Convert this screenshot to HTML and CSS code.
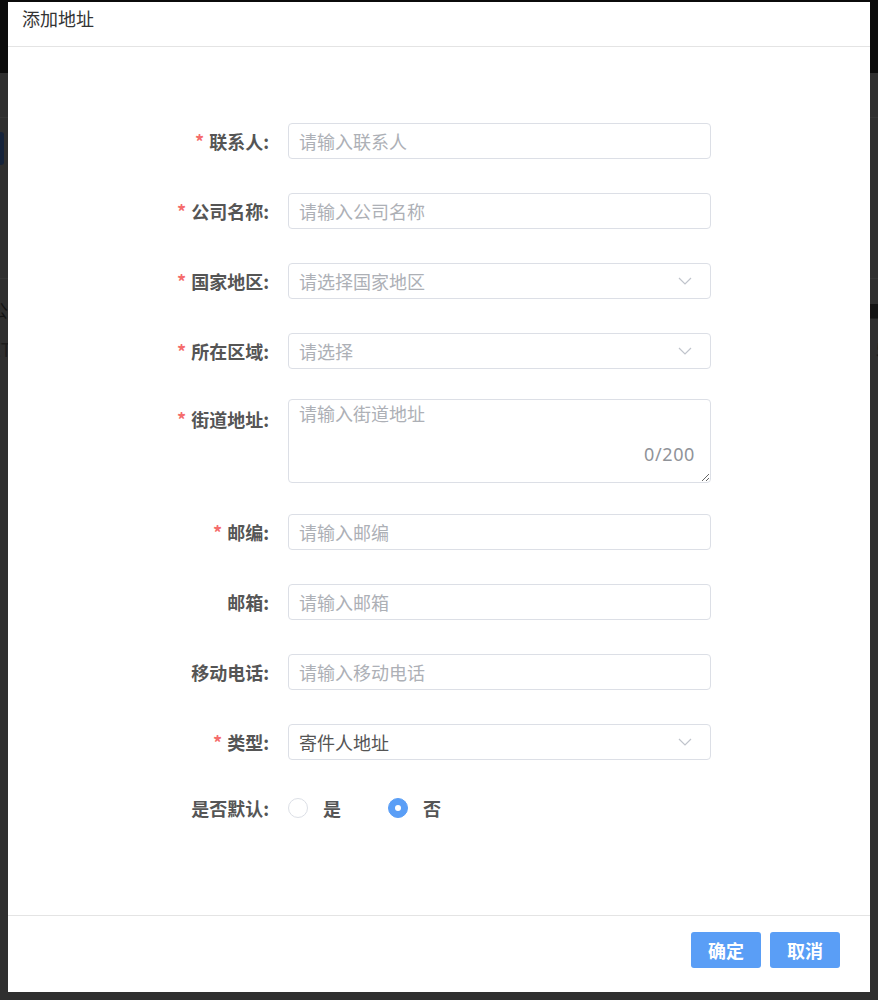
FILE: index.html
```html
<!DOCTYPE html>
<html lang="zh-CN">
<head>
<meta charset="utf-8">
<title>添加地址</title>
<link rel="stylesheet" href="styles.css">
</head>
<body>
<div class="page">
  <div class="topbar"></div>
  <div class="toolbar"><span class="under-btn"></span></div>
  <div class="under-table">
    <div class="under-row under-head"><span class="under-l">公司</span><span class="under-r">■</span></div>
    <div class="under-row"><span class="under-l">ZT</span><span class="under-r">5</span></div>
  </div>
</div>

<div class="dialog">
  <div class="dialog-header">添加地址</div>
  <div class="dialog-body">
    <form class="form">
      <div class="item">
        <label class="label req">联系人:</label>
        <input class="input" type="text" placeholder="请输入联系人">
      </div>
      <div class="item">
        <label class="label req">公司名称:</label>
        <input class="input" type="text" placeholder="请输入公司名称">
      </div>
      <div class="item">
        <label class="label req">国家地区:</label>
        <div class="select"><span class="placeholder">请选择国家地区</span>
          <svg class="chev" width="14" height="8" viewBox="0 0 14 8"><polyline points="1,1 7,7 13,1" fill="none" stroke="#c0c4cc" stroke-width="1.2"/></svg>
        </div>
      </div>
      <div class="item item-before-ta">
        <label class="label req">所在区域:</label>
        <div class="select"><span class="placeholder">请选择</span>
          <svg class="chev" width="14" height="8" viewBox="0 0 14 8"><polyline points="1,1 7,7 13,1" fill="none" stroke="#c0c4cc" stroke-width="1.2"/></svg>
        </div>
      </div>
      <div class="item item-ta">
        <label class="label label-ta req">街道地址:</label>
        <div class="ta-wrap">
          <textarea class="textarea" placeholder="请输入街道地址" maxlength="200"></textarea>
          <span class="counter">0/200</span>
        </div>
      </div>
      <div class="item">
        <label class="label req">邮编:</label>
        <input class="input" type="text" placeholder="请输入邮编">
      </div>
      <div class="item">
        <label class="label">邮箱:</label>
        <input class="input" type="text" placeholder="请输入邮箱">
      </div>
      <div class="item">
        <label class="label">移动电话:</label>
        <input class="input" type="text" placeholder="请输入移动电话">
      </div>
      <div class="item item-type">
        <label class="label req">类型:</label>
        <div class="select"><span class="value">寄件人地址</span>
          <svg class="chev" width="14" height="8" viewBox="0 0 14 8"><polyline points="1,1 7,7 13,1" fill="none" stroke="#c0c4cc" stroke-width="1.2"/></svg>
        </div>
      </div>
      <div class="item item-radio">
        <label class="label">是否默认:</label>
        <div class="radios">
          <span class="radio"><span class="circle"></span><span class="radio-text">是</span></span>
          <span class="radio"><span class="circle checked"></span><span class="radio-text">否</span></span>
        </div>
      </div>
    </form>
  </div>
  <div class="dialog-footer">
    <button class="btn" type="button">确定</button>
    <button class="btn" type="button">取消</button>
  </div>
</div>
</body>
</html>
```

FILE: styles.css
```css
* { box-sizing: border-box; }
html, body { margin: 0; padding: 0; }
body {
  background: #2f2f2f;
  font-family: "Noto Sans CJK SC", "Noto Sans", sans-serif;
  width: 878px;
  height: 1000px;
  overflow: hidden;
  position: relative;
}

/* page under the modal mask */
.page { width: 878px; }
.topbar { height: 73px; background: #0b0b0b; }
.toolbar {
  height: 205px;
  padding-top: 59px;
  background: linear-gradient(#363636, #363636) 0 44px / 100% 1px no-repeat;
}
.under-btn {
  display: block;
  width: 60px;
  height: 33px;
  margin-left: -56px;
  background: #15233a;
  border-radius: 3px;
}
.under-table { border-top: 1px solid #363636; }
.under-row {
  display: flex;
  justify-content: space-between;
  height: 40px;
  line-height: 40px;
  font-size: 18px;
  color: #1c1c1c;
}
.under-head { height: 50px; line-height: 62px; color: #141414; }
.under-l { margin-left: -10px; }
.under-r { margin-right: -8px; }

/* dialog */
.dialog {
  position: absolute;
  top: 2px;
  left: 8px;
  width: 862px;
  background: #fff;
}
.dialog-header {
  height: 45px;
  padding: 4px 14px 0;
  font-size: 18px;
  line-height: 24px;
  color: #333;
  border-bottom: 1px solid #e4e4e4;
}
.dialog-body { padding: 76px 0 89px; }

.form { margin-left: 151px; width: 552px; }
.item { display: flex; align-items: flex-start; margin-bottom: 34px; }
.item-before-ta { margin-bottom: 30px; }
.item-ta { margin-bottom: 31px; }
.item-type { margin-bottom: 30px; }
.item-radio { margin-bottom: 0; }

.label {
  width: 110px;
  margin-right: 19px;
  flex: none;
  text-align: right;
  font-size: 18px;
  line-height: 36px;
  font-weight: 700;
  color: #555;
}
.label-ta { line-height: 40px; }
.req::before {
  content: "*";
  color: #f56c6c;
  margin-right: 5px;
}

.input, .select {
  width: 423px;
  height: 36px;
  border: 1px solid #dcdfe6;
  border-radius: 4px;
  padding: 0 10px;
  font-family: inherit;
  font-size: 18px;
  color: #555;
  outline: none;
  background: #fff;
}
.input::placeholder, .textarea::placeholder { color: #adb0b6; }
.select {
  display: flex;
  align-items: center;
  justify-content: space-between;
  padding-right: 18px;
  line-height: 34px;
}
.placeholder { color: #adb0b6; }
.value { color: #555; }
.chev { display: block; }

.ta-wrap { position: relative; width: 423px; height: 84px; }
.textarea {
  display: block;
  width: 423px;
  height: 84px;
  border: 1px solid #dcdfe6;
  border-radius: 4px;
  padding: 2px 10px;
  font-family: inherit;
  font-size: 18px;
  line-height: 22px;
  color: #555;
  resize: vertical;
  outline: none;
}
.counter {
  position: absolute;
  right: 16px;
  bottom: 17px;
  font-size: 18px;
  line-height: 24px;
  letter-spacing: 0.6px;
  color: #909399;
  font-family: "Noto Sans", sans-serif;
}

.radios { display: flex; align-items: center; height: 36px; gap: 47px; }
.radio { display: flex; align-items: center; gap: 15px; }
.circle {
  width: 20px;
  height: 20px;
  border-radius: 50%;
  border: 1px solid #dcdfe6;
  background: #fff;
  position: relative;
}
.circle.checked { background: #5a9ef6; border-color: #5a9ef6; }
.circle.checked::after {
  content: "";
  position: absolute;
  left: 6px;
  top: 6px;
  width: 6px;
  height: 6px;
  border-radius: 50%;
  background: #fff;
}
.radio-text { font-size: 18px; font-weight: 700; color: #555; line-height: 36px; }

.dialog-footer {
  border-top: 1px solid #e4e4e4;
  padding: 16px 30px 24px;
  display: flex;
  justify-content: flex-end;
  gap: 9px;
}
.btn {
  width: 70px;
  height: 36px;
  border: none;
  border-radius: 3px;
  background: #5a9ef6;
  color: #fff;
  font-family: inherit;
  font-size: 18px;
  font-weight: 700;
  padding: 0;
}
```
